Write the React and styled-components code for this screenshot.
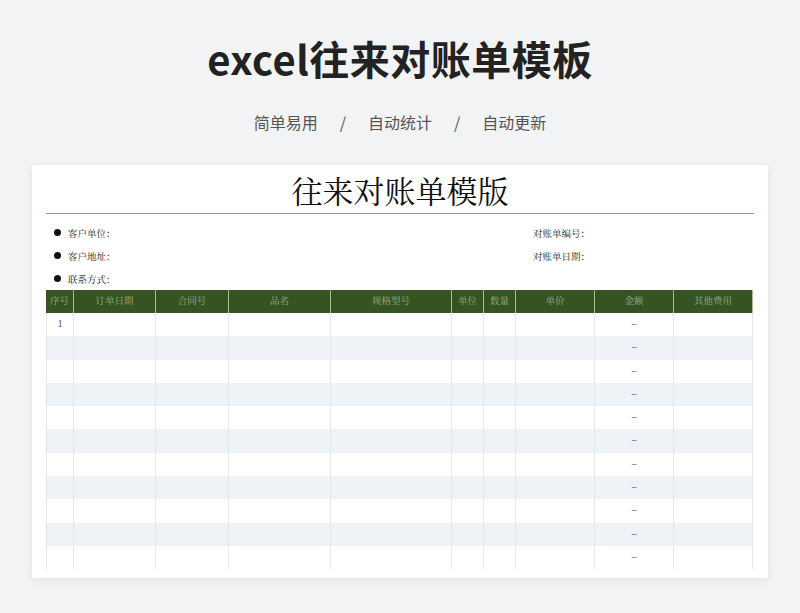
import React from "react";
import styled, { createGlobalStyle } from "styled-components";

const G = createGlobalStyle`
  body { margin: 0; background: #f2f3f5; font-family: "Noto Sans CJK SC", sans-serif; }
`;
const Page = styled.div`
  width: 800px; height: 613px; display: flex; flex-direction: column; align-items: center; overflow: hidden;
`;
const H1 = styled.h1`
  margin: 32px 0 0; font-size: 40px; font-weight: 700; color: #222; line-height: 52px;
  font-family: "Noto Sans CJK SC", sans-serif; letter-spacing: 0.5px;
`;
const Sub = styled.div`
  margin-top: 26px; font-size: 16px; color: #555; display: flex; gap: 22px; line-height: 24px;
`;
const Card = styled.div`
  margin-top: 31px; width: 736px; height: 413px; background: #fff;
  box-shadow: 0 2px 8px rgba(0,0,0,0.08); padding: 0 14px; box-sizing: border-box;
  font-family: "Liberation Serif", "Noto Serif CJK SC", "Noto Sans CJK SC", serif;
`;
const Title = styled.div`
  text-align: center; font-size: 31px; color: #111; height: 48px; line-height: 56px;
  border-bottom: 1.5px solid #6aaa98;
`;
const Info = styled.div`
  display: grid; grid-template-columns: 487px 1fr; grid-auto-rows: 23px; padding-top: 7px;
  font-size: 9.5px; color: #222; align-items: center;
`;
const InfoItem = styled.div`
  display: flex; align-items: center; gap: 7px; padding-left: ${p => p.b ? 8 : 0}px;
`;
const Dot = styled.span` width: 7px; height: 7px; border-radius: 50%; background: #111; `;
const Table = styled.div`
  display: grid; grid-template-columns: 28px 82px 73px 102px 121px 32px 32px 79px 79px 79px;
`;
const Th = styled.div`
  background: #355421; color: #9db08a; font-size: 9.5px; height: 23px; line-height: 23px;
  text-align: center; border-right: 1px solid #a8bd96; box-sizing: border-box;
  &:last-child { border-right: none; }
`;
const Td = styled.div`
  background: ${p => p.alt ? "#eff2f6" : "#fff"}; height: 23.3px; line-height: 23px;
  border-right: 1px solid #e3e6ea; border-left: ${p => p.first ? "1px solid #e3e6ea" : "none"};
  box-sizing: border-box; font-size: 9.5px; text-align: center; color: #444;
`;
const heads = ["序号","订单日期","合同号","品名","规格型号","单位","数量","单价","金额","其他费用"];

export default function App() {
  return (
    <Page>
      <G />
      <H1>excel往来对账单模板</H1>
      <Sub><span>简单易用</span><span>/</span><span>自动统计</span><span>/</span><span>自动更新</span></Sub>
      <Card>
        <Title>往来对账单模版</Title>
        <Info>
          <InfoItem b><Dot />客户单位：</InfoItem><InfoItem>对账单编号：</InfoItem>
          <InfoItem b><Dot />客户地址：</InfoItem><InfoItem>对账单日期：</InfoItem>
          <InfoItem b><Dot />联系方式：</InfoItem><InfoItem />
        </Info>
        <Table>
          {heads.map(h => <Th key={h}>{h}</Th>)}
          {Array.from({ length: 11 }).flatMap((_, r) =>
            heads.map((h, c) => (
              <Td key={r + "-" + c} alt={r % 2 === 1} first={c === 0}>
                {c === 0 && r === 0 ? "1" : c === 8 ? "–" : ""}
              </Td>
            ))
          )}
        </Table>
      </Card>
    </Page>
  );
}
